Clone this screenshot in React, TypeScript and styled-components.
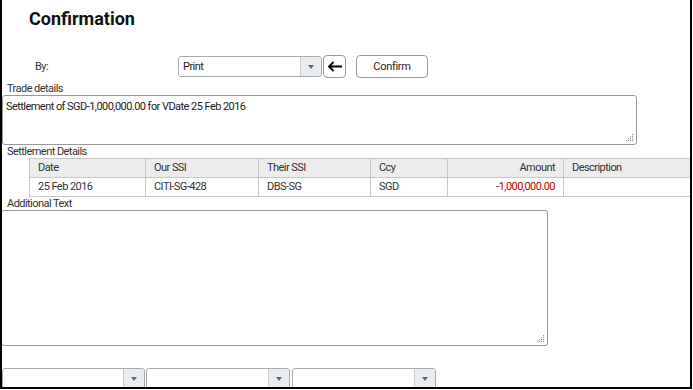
import React from "react";
import styled, { createGlobalStyle } from "styled-components";

const GlobalStyle = createGlobalStyle`
  html, body {
    margin: 0;
    padding: 0;
    background: #fff;
  }
  body {
    font-family: Roboto, "Liberation Sans", sans-serif;
    font-size: 11px;
    letter-spacing: -0.55px;
    color: #333;
  }
`;

const Frame = styled.div`
  box-sizing: border-box;
  width: 692px;
  height: 389px;
  border: 2px solid #000;
  border-top: none;
  display: flex;
  flex-direction: column;
  overflow: hidden;
`;

const Title = styled.h1`
  margin: 8px 0 0 27px;
  font-size: 18px;
  font-weight: 700;
  line-height: 21px;
  letter-spacing: normal;
  color: #111;
`;

const ByRow = styled.div`
  display: flex;
  align-items: center;
  margin-top: 26px;
  height: 23px;
`;

const ByLabel = styled.span`
  width: 143px;
  padding-left: 33px;
  color: #333;
`;

const Select = styled.div<{ $width: number; $height?: number }>`
  box-sizing: border-box;
  flex: none;
  width: ${({ $width }) => $width}px;
  height: ${({ $height }) => $height ?? 21}px;
  display: flex;
  border: 1px solid #aaa;
  border-radius: 3px;
  background: #fff;
  overflow: hidden;
`;

const SelectValue = styled.span`
  flex: 1;
  padding-left: 4px;
  line-height: 19px;
  color: #222;
`;

const SelectButton = styled.span`
  width: 20px;
  border-left: 1px solid #ccc;
  background: #e9edf0;
  display: flex;
  align-items: center;
  justify-content: center;
  &::after {
    content: "";
    border-left: 3.5px solid transparent;
    border-right: 3.5px solid transparent;
    border-top: 4px solid #5b6b7a;
  }
`;

const ArrowButton = styled.button`
  box-sizing: border-box;
  width: 23px;
  height: 23px;
  margin-left: 1px;
  padding: 0;
  border: 1px solid #999;
  border-radius: 4px;
  background: #fff;
  display: flex;
  align-items: center;
  justify-content: center;
`;

const ConfirmButton = styled.button`
  box-sizing: border-box;
  width: 72px;
  height: 23px;
  margin-left: 10px;
  border: 1px solid #999;
  border-radius: 4px;
  background: #fff;
  font-family: Roboto, "Liberation Sans", sans-serif;
  font-size: 11px;
  letter-spacing: -0.3px;
  color: #222;
`;

const SectionLabel = styled.div<{ $top: number }>`
  margin: ${({ $top }) => $top}px 0 0 5px;
  line-height: 13px;
  color: #333;
`;

const TextBox = styled.div<{ $width: number; $height: number; $left: number }>`
  position: relative;
  box-sizing: border-box;
  flex: none;
  width: ${({ $width }) => $width}px;
  height: ${({ $height }) => $height}px;
  margin-left: ${({ $left }) => $left}px;
  border: 1px solid #999;
  border-radius: 3px;
  padding: 4px 3px;
  line-height: 13px;
  color: #222;
`;

const Grip = styled.svg`
  position: absolute;
  right: 2px;
  bottom: 2px;
`;

const Table = styled.div`
  margin: 0 0 0 27px;
  display: grid;
  grid-template-columns: 116px 113px 112px 77px 116px 1fr;
  border-top: 1px solid #c8c8c8;
`;

const Cell = styled.div<{ $head?: boolean; $right?: boolean; $red?: boolean }>`
  height: 18px;
  line-height: 18px;
  padding: 0 8px;
  border-left: 1px solid #c8c8c8;
  border-bottom: 1px solid #c8c8c8;
  background: ${({ $head }) => ($head ? "#ececec" : "#fff")};
  text-align: ${({ $right }) => ($right ? "right" : "left")};
  color: ${({ $red }) => ($red ? "#c00000" : "#333")};
  white-space: nowrap;
`;

const Footer = styled.div`
  margin-top: auto;
  margin-bottom: -2px;
  margin-left: 0;
  display: flex;
  gap: 1px;
  & > :last-child {
    margin-left: 1px;
  }
`;

const ResizeGrip = () => (
  <Grip width="8" height="8" viewBox="0 0 8 8">
    {[
      [6, 0],
      [4, 2],
      [6, 2],
      [2, 4],
      [4, 4],
      [6, 4],
      [0, 6],
      [2, 6],
      [4, 6],
      [6, 6],
    ].map(([x, y]) => (
      <rect key={`${x}-${y}`} x={x} y={y} width="1.2" height="1.2" fill="#999" />
    ))}
  </Grip>
);

const columns = [
  { head: "Date", value: "25 Feb 2016" },
  { head: "Our SSI", value: "CITI-SG-428" },
  { head: "Their SSI", value: "DBS-SG" },
  { head: "Ccy", value: "SGD" },
  { head: "Amount", value: "-1,000,000.00", right: true, red: true },
  { head: "Description", value: "" },
];

const App = () => (
  <>
    <GlobalStyle />
    <Frame>
      <Title>Confirmation</Title>

      <ByRow>
        <ByLabel>By:</ByLabel>
        <Select $width={144}>
          <SelectValue>Print</SelectValue>
          <SelectButton />
        </Select>
        <ArrowButton>
          <svg width="16" height="11" viewBox="0 0 16 11">
            <path d="M15 5.5H2M6.5 1L2 5.5L6.5 10" stroke="#000" strokeWidth="1.8" fill="none" />
          </svg>
        </ArrowButton>
        <ConfirmButton>Confirm</ConfirmButton>
      </ByRow>

      <SectionLabel $top={4}>Trade details</SectionLabel>
      <TextBox $width={635} $height={50} $left={0}>
        Settlement of SGD-1,000,000.00 for VDate 25 Feb 2016
        <ResizeGrip />
      </TextBox>

      <SectionLabel $top={0}>Settlement Details</SectionLabel>
      <Table>
        {columns.map((c) => (
          <Cell key={c.head} $head $right={c.right}>
            {c.head}
          </Cell>
        ))}
        {columns.map((c) => (
          <Cell key={`${c.head}-v`} $right={c.right} $red={c.red}>
            {c.value}
          </Cell>
        ))}
      </Table>

      <SectionLabel $top={0}>Additional Text</SectionLabel>
      <TextBox $width={547} $height={136} $left={-1}>
        <ResizeGrip />
      </TextBox>

      <Footer>
        <Select $width={143}>
          <SelectValue />
          <SelectButton />
        </Select>
        <Select $width={144}>
          <SelectValue />
          <SelectButton />
        </Select>
        <Select $width={144}>
          <SelectValue />
          <SelectButton />
        </Select>
      </Footer>
    </Frame>
  </>
);

export default App;
